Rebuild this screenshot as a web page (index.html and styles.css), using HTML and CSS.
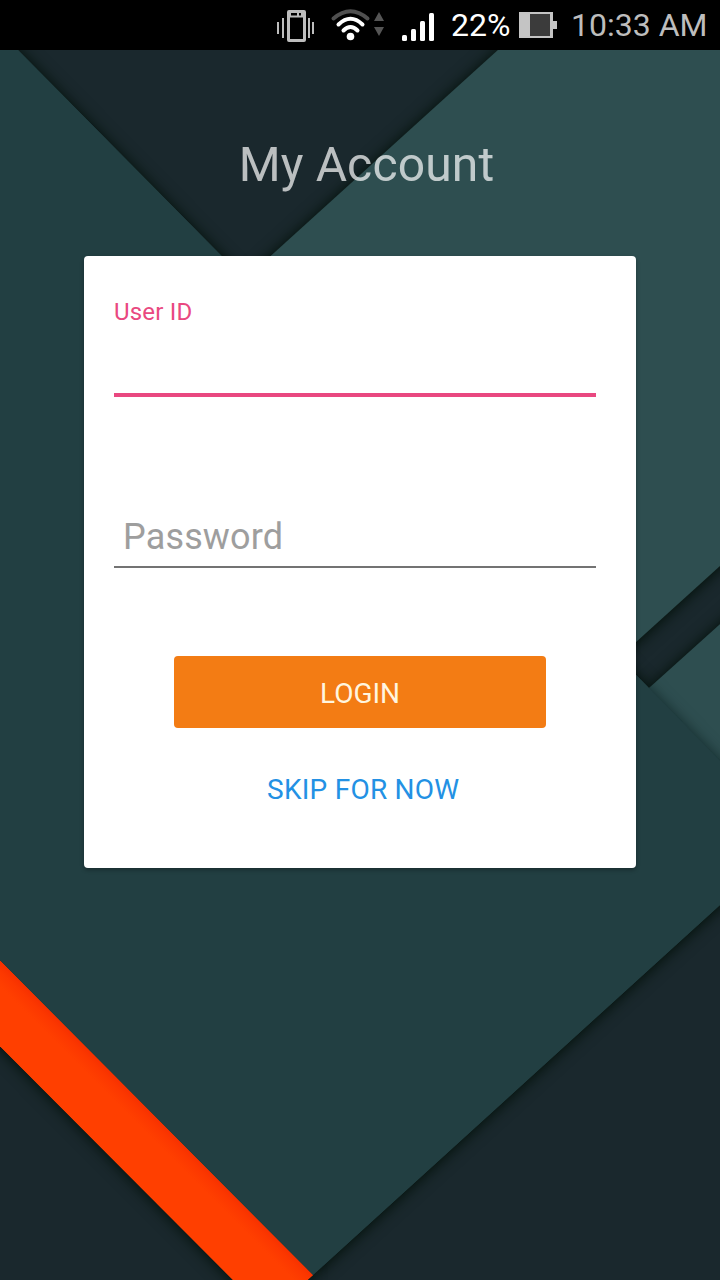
FILE: index.html
```html
<!DOCTYPE html>
<html lang="en">
<head>
<meta charset="utf-8">
<title>My Account</title>
<link rel="stylesheet" href="styles.css">
</head>
<body>
<div class="screen">
  <svg class="wallpaper" viewBox="0 0 720 1280" aria-hidden="true">
    <defs>
      <filter id="shade" x="-10%" y="-10%" width="120%" height="120%" color-interpolation-filters="sRGB">
        <feDropShadow dx="0" dy="1" stdDeviation="7.500" flood-color="#000e06" flood-opacity="1"/>
      </filter>
      <filter id="soft" x="-20%" y="-20%" width="140%" height="140%" color-interpolation-filters="sRGB">
        <feDropShadow dx="0" dy="0" stdDeviation="7" flood-color="#122a2b" flood-opacity="1"/>
      </filter>
      <linearGradient id="ember" gradientUnits="userSpaceOnUse" x1="100" y1="1060.500" x2="87" y2="1073.500">
        <stop offset="0" stop-color="#f63000"/>
        <stop offset=".4" stop-color="#fc3800"/>
        <stop offset="1" stop-color="#ff3f00"/>
      </linearGradient>
      <clipPath id="lower-light"><path d="M649 688L800 552V900Z"/></clipPath>
    </defs>
    <rect width="720" height="1280" fill="#1a282d"/>
    <path class="deep" filter="url(#shade)" d="M-60 -29L18 50L649 688L760 802V868.600L313 1275L-60 900Z"/>
    <path class="light" filter="url(#shade)" d="M554 -1H800V493.500L560 711L200 320Z"/>
    <path class="light" filter="url(#shade)" d="M649 688L800 552V900Z"/>
    <path filter="url(#shade)" fill="#ff3f00" d="M-60 900V986L254 1301H284L313 1275Z"/>
    <path fill="url(#ember)" d="M-60 900V986L254 1301H284L313 1275Z"/>
    <g clip-path="url(#lower-light)">
      <path class="deep" filter="url(#soft)" d="M600 638L649 688L760 802V868H600Z"/>
    </g>
    <path class="deep" d="M-60 -29L18 50L649 688L760 802V868.600L313 1275L-60 900Z"/>
  </svg>

  <header class="status-bar">
    <svg class="status-icons" viewBox="0 0 160 50" role="img" aria-label="Vibrate, Wi-Fi, signal">
      <g fill="#bdbdbd">
        <path fill-rule="evenodd" d="M14 10H29Q31 10 31 12V40Q31 42 29 42H14Q12 42 12 40V12Q12 10 14 10ZM15 17.500V39H28V17.500ZM16 13V15.500H22V13ZM24 13V15.500H26V13Z"/>
        <path d="M2 22h2v12h-2zM7 18h2v20h-2zM33 18h2v20h-2zM37 22h2v12h-2z"/>
      </g>
      <g fill="none" stroke-linecap="round">
        <path stroke="#505050" stroke-width="4" d="M58.500 18.500Q75.500 4 92.500 18.500"/>
        <path stroke="#fff" stroke-width="4" d="M63.500 24.500Q75.500 13 87.500 24.500M68.500 30.500Q75.500 23.500 82.500 30.500"/>
      </g>
      <circle cx="75.500" cy="36.500" r="3.800" fill="#fff"/>
      <path fill="#555" d="M104 12l5 9h-10zM99 27h10l-5 9z"/>
      <g fill="#fff">
        <rect x="127" y="35" width="5" height="6" rx="1.500"/>
        <rect x="136" y="29" width="5" height="12" rx="1.500"/>
        <rect x="145" y="21" width="5" height="20" rx="1.500"/>
        <rect x="154" y="13" width="5" height="28" rx="1.500"/>
      </g>
    </svg>
    <span class="percent">22%</span>
    <svg class="battery" viewBox="0 0 38 26" aria-hidden="true">
      <path fill="#c4c4c4" d="M0 0h34v9h4v8h-4v9H0z"/>
      <path fill="#3b3b3b" d="M11 2h20v22H11z"/>
    </svg>
    <span class="time">10:33 AM</span>
  </header>

  <main class="content">
    <h1 class="title">My Account</h1>
    <form class="card">
      <label class="field field-active"><span class="label">User ID</span></label>
      <label class="field field-idle"><span class="hint">Password</span></label>
      <button class="login" type="button">LOGIN</button>
      <a class="skip">SKIP FOR NOW</a>
    </form>
  </main>
</div>
</body>
</html>
```
FILE: styles.css
```css
* { box-sizing: border-box; }

body {
  margin: 0;
  font-family: Roboto, "Liberation Sans", sans-serif;
}

.screen {
  position: relative;
  width: 720px;
  height: 1280px;
  overflow: hidden;
  isolation: isolate;
}

.wallpaper {
  position: absolute;
  inset: 0;
  z-index: -1;
  width: 720px;
  height: 1280px;
}

.light { fill: #2e4e50; }
.deep { fill: #223f42; }

.status-bar {
  display: flex;
  justify-content: flex-end;
  align-items: center;
  height: 50px;
  padding-right: 13px;
  background: #000;
  font-size: 32px;
  line-height: 50px;
  white-space: nowrap;
}

.status-icons { width: 160px; height: 50px; }

.percent {
  width: 60px;
  margin-left: 16px;
  color: #fff;
}

.battery {
  width: 38px;
  height: 26px;
  margin: 0 14px 0 8px;
}

.time {
  width: 136px;
  color: #bdbdbd;
}

.content {
  display: flex;
  flex-direction: column;
  align-items: center;
  padding-top: 83px;
}

.title {
  margin: 0 0 59px 13px;
  color: #fff;
  font-size: 48px;
  font-weight: 400;
  line-height: 64px;
  letter-spacing: .15px;
  opacity: .7;
}

.card {
  display: flex;
  flex-direction: column;
  width: 552px;
  height: 612px;
  padding: 40px 40px 0 30px;
  border-radius: 4px;
  background: #fff;
  box-shadow: 0 2px 4px rgba(0, 0, 0, .3);
}

.field { display: block; }

.field-active {
  height: 101px;
  border-bottom: 4px solid #e94880;
}

.label {
  display: block;
  color: #e94880;
  font-size: 24px;
  line-height: 32px;
  letter-spacing: .2px;
}

.field-idle {
  height: 59px;
  margin-top: 112px;
  padding-left: 9px;
  border-bottom: 2px solid #737373;
}

.hint {
  display: block;
  padding-top: 4px;
  color: #9e9e9e;
  font-size: 36px;
  line-height: 48px;
  letter-spacing: .15px;
}

.login {
  width: 372px;
  height: 72px;
  margin: 88px 0 0 60px;
  padding: 3px 0 0;
  border: 0;
  border-radius: 4px;
  background: #f37c14;
  color: #fff5df;
  font: 400 28px/36px Roboto, "Liberation Sans", sans-serif;
}

.skip {
  margin: 44px 0 0 153px;
  color: #2391e4;
  font-size: 28px;
  line-height: 36px;
  letter-spacing: .25px;
}
```
